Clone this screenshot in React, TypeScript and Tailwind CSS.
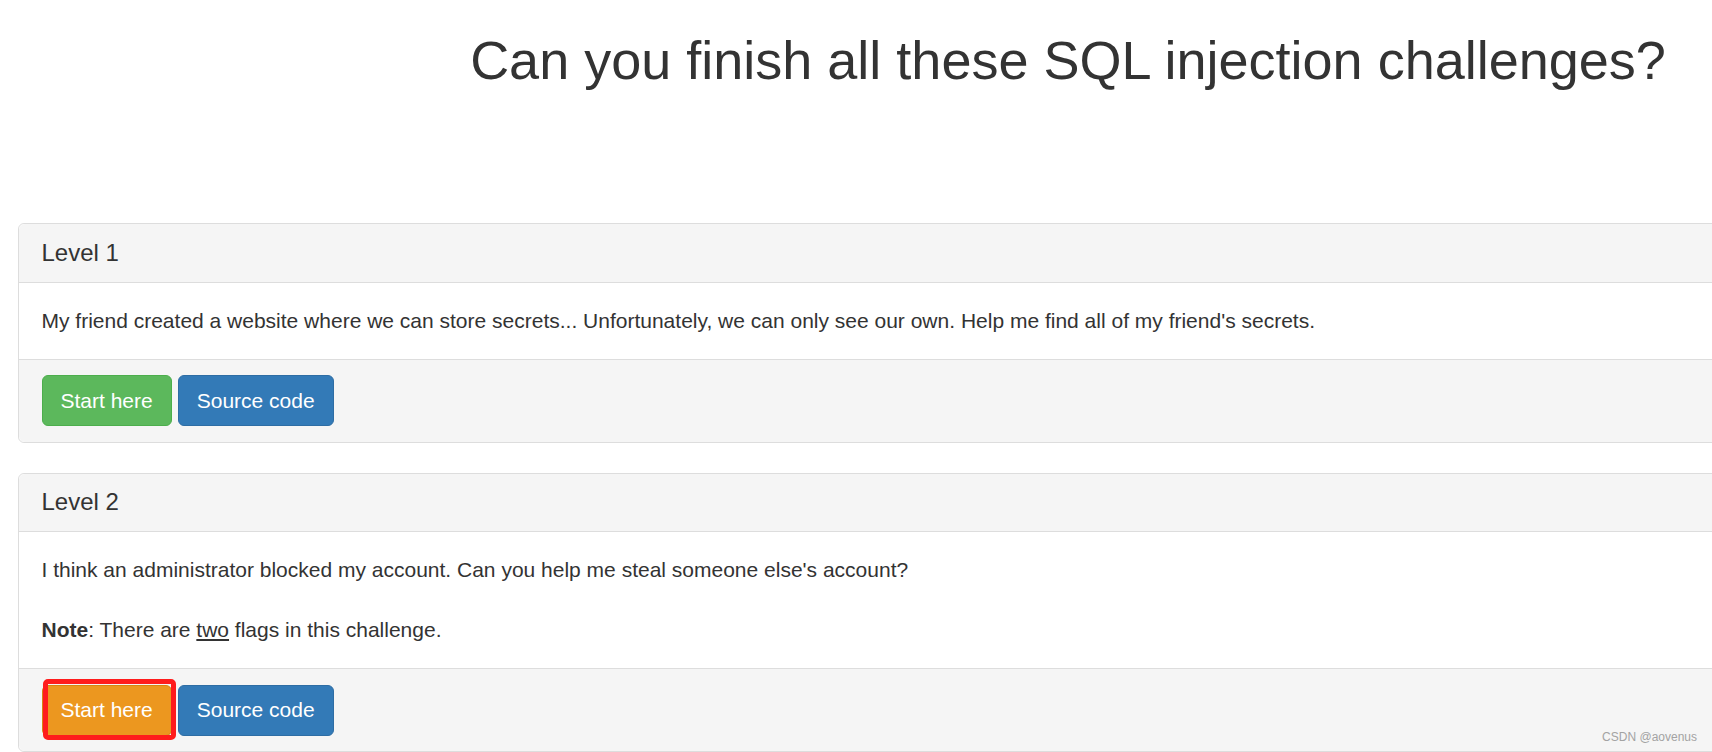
const levels = [
  {
    title: "Level 1",
    body: (
      <>
        My friend created a website where we can store secrets... Unfortunately, we can only see our own. Help me find all of
        my friend's secrets.
      </>
    ),
    active: false,
  },
  {
    title: "Level 2",
    body: (
      <>
        I think an administrator blocked my account. Can you help me steal someone else's account?
        <br />
        <br />
        <b>Note</b>: There are <u>two</u> flags in this challenge.
      </>
    ),
    active: true,
  },
]

const Panel = ({ title, body, active }: { title: string; body: React.ReactNode; active: boolean }) => {
  return (
    <div className="mb-[30px] rounded-[6px] border border-[#dddddd] bg-white">
      <div className="rounded-t-[6px] border-b border-[#dddddd] bg-[#f5f5f5] px-[22.5px] py-[15.5px]">
        <h3 className="text-[24px] leading-[26.4px] text-[#333333]">{title}</h3>
      </div>
      <div className="px-[22.5px] py-[23px] text-[21px] leading-[30px] text-[#333333]">{body}</div>
      <div className="flex gap-[6px] rounded-b-[6px] border-t border-[#dddddd] bg-[#f5f5f5] px-[22.5px] py-[15.5px]">
        <div className="relative">
          <button
            className={
              active
                ? "h-[51px] rounded-[6px] border border-[#d58512] bg-[#ec971f] px-[18px] text-[21px] text-white"
                : "h-[51px] rounded-[6px] border border-[#4cae4c] bg-[#5cb85c] px-[18px] text-[21px] text-white"
            }
          >
            Start here
          </button>
          {active && (
            <div className="pointer-events-none absolute left-[1px] top-[-6px] h-[61px] w-[133px] rounded-[5px] border-[5px] border-[#ff1c1c]" />
          )}
        </div>
        <button className="h-[51px] rounded-[6px] border border-[#2e6da4] bg-[#337ab7] px-[18px] text-[21px] text-white">
          Source code
        </button>
      </div>
    </div>
  )
}

export default function App() {
  return (
    <div className="relative h-[752px] w-[1712px] overflow-hidden bg-white font-['Liberation_Sans',Arial,sans-serif]">
      <div className="w-[2136px] px-[18px]">
        <h1 className="mt-[31px] text-center text-[54px] font-normal leading-[59.4px] text-[#333333]">
          Can you finish all these SQL injection challenges?
        </h1>
        <div className="mt-[133px]">
          {levels.map((lv) => (
            <Panel key={lv.title} title={lv.title} body={lv.body} active={lv.active} />
          ))}
        </div>
      </div>
      <div className="absolute bottom-[8px] right-[15px] text-[12px] leading-[14px] text-[#a3a3a3]">CSDN @aovenus</div>
    </div>
  )
}
